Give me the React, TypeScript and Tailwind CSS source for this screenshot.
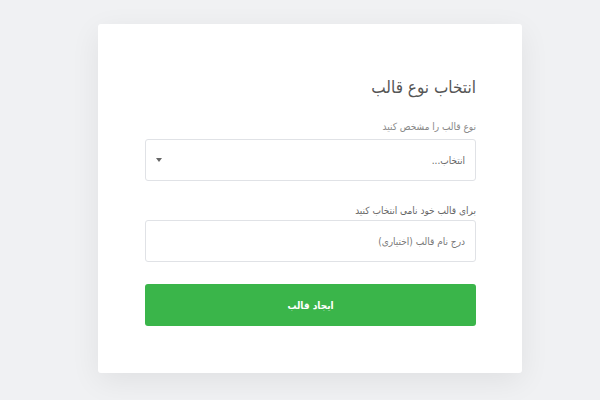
export default function App() {
  return (
    <div
      className="min-h-screen w-full bg-[#f0f1f3] pl-[98px] pt-[24px]"
      style={{ fontFamily: '"DejaVu Sans Condensed", "DejaVu Sans", sans-serif' }}
    >
      <div
        dir="rtl"
        className="w-[424px] h-[349px] bg-white rounded-[3px] shadow-[0_8px_30px_rgba(0,0,0,0.07)] pr-[46px] pl-[47px] pt-[51px]"
      >
        <h1 className="text-[17px] text-[#555] leading-[24px] mb-[21px]">انتخاب نوع قالب</h1>

        <label className="block text-[10px] text-[#888] leading-[14px] mb-[5px]">
          نوع قالب را مشخص کنید
        </label>
        <div className="h-[42px] border border-[#e0e2e6] rounded-[3px] flex items-center justify-between pr-[10px] pl-[10px]">
          <span className="text-[10px] text-[#666]">انتخاب...</span>
          <span className="w-0 h-0 border-l-[3px] border-r-[3px] border-t-[4px] border-l-transparent border-r-transparent border-t-[#666]" />
        </div>

        <label className="block text-[10px] text-[#666] leading-[14px] mt-[23px] mb-[2px]">
          برای قالب خود نامی انتخاب کنید
        </label>
        <div className="h-[42px] border border-[#e0e2e6] rounded-[3px] flex items-center px-[10px]">
          <span className="text-[10px] text-[#777]">درج نام قالب (اختیاری)</span>
        </div>

        <button className="mt-[22px] w-full h-[42px] bg-[#3ab54a] rounded-[3px] text-white text-[10px] font-bold">
          ایجاد قالب
        </button>
      </div>
    </div>
  );
}
